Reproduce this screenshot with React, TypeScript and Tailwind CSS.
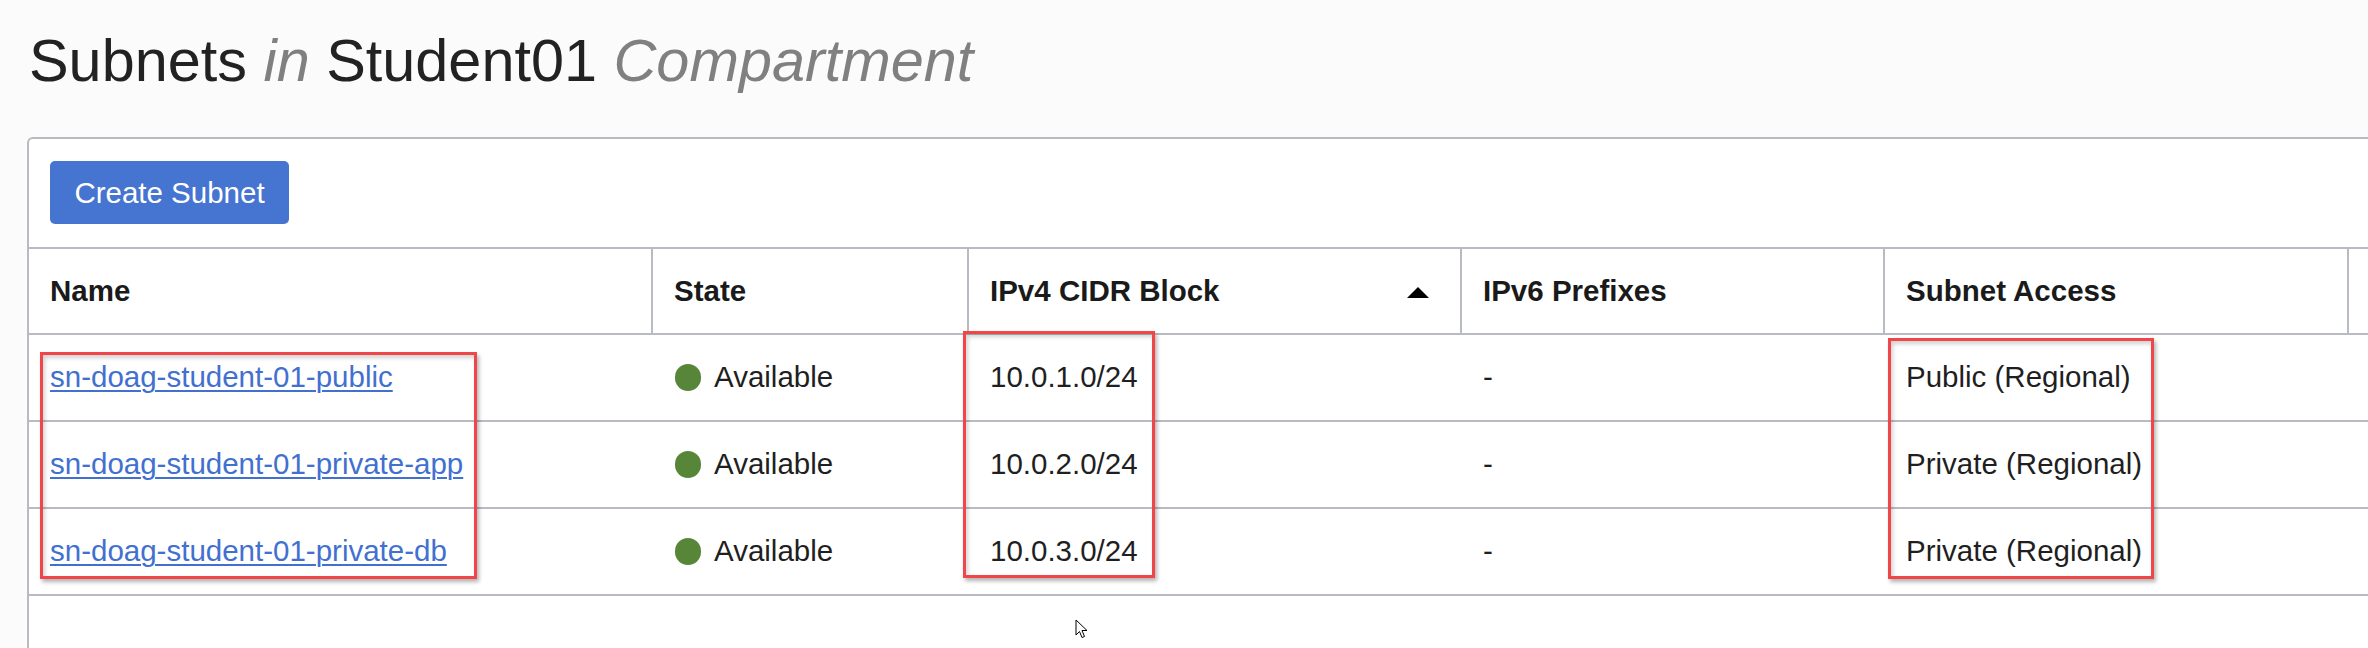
import React from "react";

const rows = [
  { name: "sn-doag-student-01-public", cidr: "10.0.1.0/24", access: "Public (Regional)" },
  { name: "sn-doag-student-01-private-app", cidr: "10.0.2.0/24", access: "Private (Regional)" },
  { name: "sn-doag-student-01-private-db", cidr: "10.0.3.0/24", access: "Private (Regional)" },
];

const grid = "grid grid-cols-[624px_316px_493px_423px_464px_1fr]";

export default function App() {
  return (
    <div
      className="relative w-[2368px] h-[648px] overflow-hidden bg-[#fbfbfb] text-[#1f1f1f]"
      style={{ fontFamily: '"Liberation Sans", Arial, sans-serif' }}
    >
      <h1 className="pl-[29px] pt-[31px] text-[59.4px] leading-[60px] font-normal text-[#222] whitespace-nowrap">
        Subnets <span className="italic text-[#808080]">in</span> Student01{" "}
        <span className="italic text-[#808080]">Compartment</span>
      </h1>

      <div className="ml-[27px] mt-[46px] border-t-2 border-l-2 border-[#b8bbc1] rounded-tl-[6px] bg-white h-[600px]">
        <div className="pl-[21px] pt-[22px] pb-[23px]">
          <button className="w-[239px] h-[63px] rounded-[5px] bg-[#4674d1] text-white text-[29.5px] leading-none">
            Create Subnet
          </button>
        </div>

        <div className={`${grid} h-[86px] border-t-2 border-[#b8bbc1] font-bold text-[29.5px] text-[#1a1a1a]`}>
          <div className="flex items-center px-[21px] border-r-2 border-[#b8bbc1]">Name</div>
          <div className="flex items-center px-[21px] border-r-2 border-[#b8bbc1]">State</div>
          <div className="flex items-center justify-between pl-[21px] pr-[31px] border-r-2 border-[#b8bbc1]">
            <span>IPv4 CIDR Block</span>
            <svg width="22" height="11" viewBox="0 0 22 11" className="mt-[2px]">
              <polygon points="11,0 22,11 0,11" fill="#000" />
            </svg>
          </div>
          <div className="flex items-center px-[21px] border-r-2 border-[#b8bbc1]">IPv6 Prefixes</div>
          <div className="flex items-center px-[21px] border-r-2 border-[#b8bbc1]">Subnet Access</div>
          <div></div>
        </div>

        {rows.map((r) => (
          <div key={r.name} className={`${grid} h-[87px] border-t-2 border-[#b8bbc1] text-[29.5px] text-[#1f1f1f]`}>
            <div className="flex items-center px-[21px]">
              <a href="#" className="text-[#4270cf] underline underline-offset-[3px] decoration-[2px]">
                {r.name}
              </a>
            </div>
            <div className="flex items-center px-[22px] gap-[13px]">
              <span className="w-[26px] h-[27px] rounded-full bg-[#578639] inline-block"></span>
              <span>Available</span>
            </div>
            <div className="flex items-center px-[21px]">{r.cidr}</div>
            <div className="flex items-center px-[21px]">-</div>
            <div className="flex items-center px-[21px]">{r.access}</div>
            <div></div>
          </div>
        ))}
        <div className="border-t-2 border-[#b8bbc1]"></div>
      </div>

      {/* annotation boxes */}
      <div className="absolute left-[40px] top-[352px] w-[437px] h-[227px] border-[3px] border-[#f0464a] shadow-[2px_3px_4px_rgba(0,0,0,0.3),inset_2px_3px_4px_rgba(0,0,0,0.18)]"></div>
      <div className="absolute left-[963px] top-[331px] w-[192px] h-[247px] border-[3px] border-[#f0464a] shadow-[2px_3px_4px_rgba(0,0,0,0.3),inset_2px_3px_4px_rgba(0,0,0,0.18)]"></div>
      <div className="absolute left-[1888px] top-[338px] w-[266px] h-[241px] border-[3px] border-[#f0464a] shadow-[2px_3px_4px_rgba(0,0,0,0.3),inset_2px_3px_4px_rgba(0,0,0,0.18)]"></div>

      {/* mouse cursor */}
      <svg className="absolute left-[1075px] top-[619px]" width="13" height="20" viewBox="0 0 13 20">
        <path d="M1 1 L1 16 L4.5 12.5 L7 18.5 L9.5 17.5 L7 11.5 L12 11.5 Z" fill="#fff" stroke="#000" strokeWidth="1" strokeLinejoin="round" />
      </svg>
    </div>
  );
}
